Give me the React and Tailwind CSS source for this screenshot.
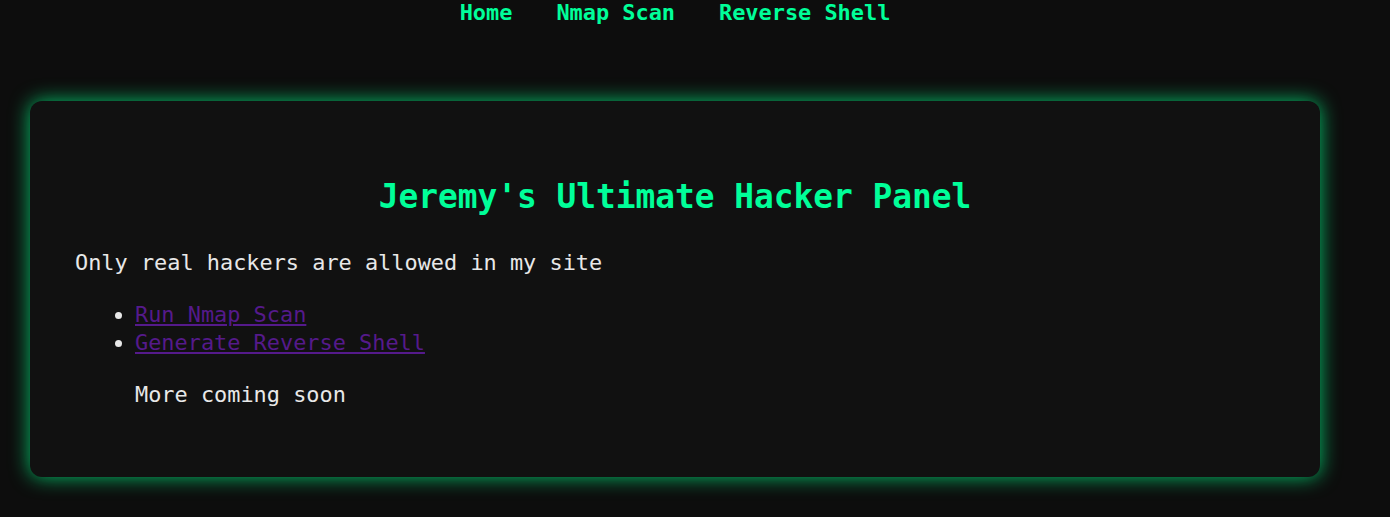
export default function App() {
  return (
    <div className="min-h-[517px] bg-[#0d0d0d] pl-[30px] pr-[70px] font-['DejaVu_Sans_Mono',monospace] text-[21.9px] text-[#e8e8e8]">
      <nav className="flex justify-center gap-[44px] pt-0 leading-[26px]">
        <a href="#" className="font-bold text-[#00ff99]">Home</a>
        <a href="#" className="font-bold text-[#00ff99]">Nmap Scan</a>
        <a href="#" className="font-bold text-[#00ff99]">Reverse Shell</a>
      </nav>

      <div className="mt-[75px] h-[376px] rounded-[12px] bg-[#111111] px-[45px] pt-[77px] shadow-[0_0_20px_rgba(0,255,136,0.75)]">
        <h1 className="text-center text-[32.8px] font-bold leading-[39px] text-[#00ff99]">
          Jeremy's Ultimate Hacker Panel
        </h1>
        <p className="mt-[32px] leading-[28px]">Only real hackers are allowed in my site</p>
        <ul className="mt-[24px] list-disc pl-[60px] leading-[28px]">
          <li>
            <a href="#" className="text-[#551a8b] underline">Run Nmap Scan</a>
          </li>
          <li>
            <a href="#" className="text-[#551a8b] underline">Generate Reverse Shell</a>
          </li>
          <p className="mt-[24px]">More coming soon</p>
        </ul>
      </div>
    </div>
  );
}
